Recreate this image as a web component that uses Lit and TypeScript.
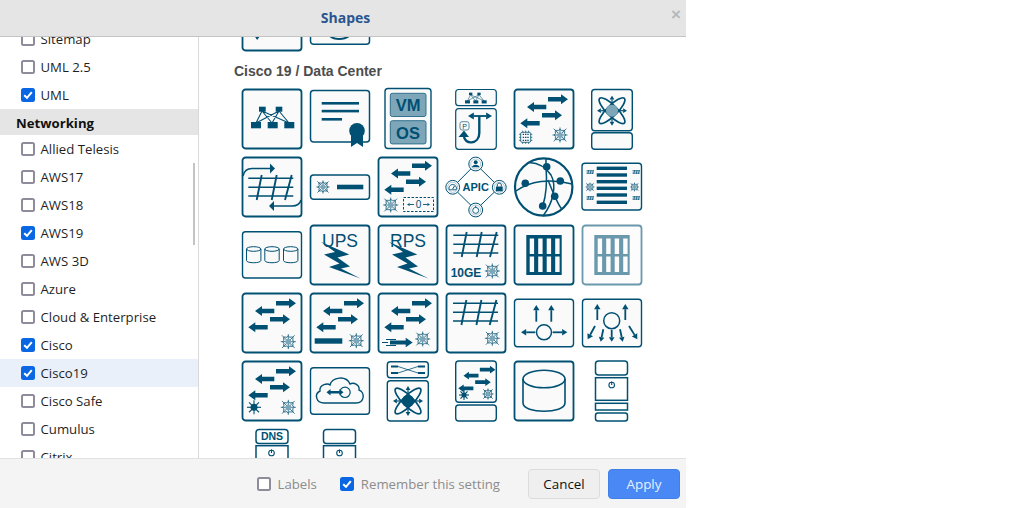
import { LitElement, html, css, svg } from "lit";
import { customElement } from "lit/decorators.js";

const C = "#005073";
const MID = "#7ea6b9";

// --- drawing helpers, coordinates are px inside a 68x68 cell ---
const box = (x1: number, y1: number, x2: number, y2: number, sw = 1.5, r = 3) =>
  svg`<rect x=${x1} y=${y1} width=${x2 - x1} height=${y2 - y1} rx=${r} fill="#fafafa" stroke=${C} stroke-width=${sw} />`;

const big = () => box(4.5, 4.5, 63.5, 63.5, 1.8);

const bar = (x1: number, y1: number, x2: number, y2: number) =>
  svg`<rect x=${x1} y=${y1} width=${x2 - x1} height=${y2 - y1} fill=${C} />`;

const fat = (x1: number, x2: number, y: number, t = 4.6, h = 10, l = 7) => {
  const d = x2 > x1 ? 1 : -1;
  const m = x2 - d * l;
  return svg`<polygon fill=${C} points="${x1},${y - t / 2} ${m},${y - t / 2} ${m},${y - h / 2} ${x2},${y} ${m},${y + h / 2} ${m},${y + t / 2} ${x1},${y + t / 2}" />`;
};

const thin = (x1: number, y1: number, x2: number, y2: number, sw = 1.6, s = 4) => {
  const a = Math.atan2(y2 - y1, x2 - x1);
  const bx = x2 - Math.cos(a) * s * 1.3;
  const by = y2 - Math.sin(a) * s * 1.3;
  const nx = -Math.sin(a) * s * 0.8;
  const ny = Math.cos(a) * s * 0.8;
  return svg`<line x1=${x1} y1=${y1} x2=${bx} y2=${by} stroke=${C} stroke-width=${sw} />
    <polygon fill=${C} points="${x2},${y2} ${bx + nx},${by + ny} ${bx - nx},${by - ny}" />`;
};

const fourArrows = (dx = 0, dy = 0, k = 1) => svg`<g transform="translate(${dx} ${dy}) scale(${k})">
  ${fat(38, 58, 14.3)}${fat(36.3, 17, 22)}${fat(32, 52, 30.3)}${fat(29.7, 10.3, 38.3)}
</g>`;

const snow = (cx: number, cy: number, r = 7.5, fill = MID, sw = 0.85) => {
  const rays = [0, 90, 180, 270];
  return svg`<g transform="translate(${cx} ${cy})" stroke="#1f6683" stroke-width=${sw} fill="none">
    ${rays.map(
      (a) => svg`<g transform="rotate(${a})">
        <line x1="0" y1="0" x2=${r} y2="0" />
        <line x1="0" y1="0" x2=${r * 0.85} y2=${r * 0.85} />
        <path d="M${r * 0.5} ${-r * 0.26} L${r * 0.8} 0 L${r * 0.5} ${r * 0.26}" />
        <path d="M${r * 0.62} ${r * 0.24} L${r * 0.62} ${r * 0.62} L${r * 0.24} ${r * 0.62}" />
      </g>`,
    )}
    <circle r=${r * 0.38} fill=${fill} stroke="none" />
  </g>`;
};

const sun = (cx: number, cy: number, r = 7) => {
  const rays = [0, 45, 90, 135, 180, 225, 270, 315];
  return svg`<g transform="translate(${cx} ${cy})" stroke=${C} stroke-width="1.1">
    ${rays.map((a) => svg`<line transform="rotate(${a})" x1="0" y1="0" x2=${r} y2="0" />`)}
    <circle r=${r * 0.5} fill=${C} stroke="none" />
  </g>`;
};

const mesh = (dx = 0, dy = 0, k = 1, sw = 1.5) => svg`<g transform="translate(${dx} ${dy}) scale(${k})" stroke=${C} stroke-width=${sw} fill="none">
  <path d="M0 3.3H45M0 12.3H45M0 21H45" />
  <path d="M13.4 0L8.4 25M28.4 0L23.4 25M43.4 0L36.7 25" stroke-width=${sw * 1.25} />
</g>`;

const atom = (cx: number, cy: number, fill = MID, r = 6) => svg`<g transform="translate(${cx} ${cy})">
  <ellipse rx="17.5" ry="5.2" transform="rotate(45)" fill="none" stroke=${C} stroke-width="1.7" />
  <ellipse rx="17.5" ry="5.2" transform="rotate(-45)" fill="none" stroke=${C} stroke-width="1.7" />
  ${thin(-5, 0, -15, 0, 1.2, 3)}${thin(5, 0, 15, 0, 1.2, 3)}${thin(0, -5, 0, -15, 1.2, 3)}${thin(0, 5, 0, 15, 1.2, 3)}
  <circle r=${r} fill=${fill} />
</g>`;

const tree = (dx = 0, dy = 0, k = 1) => svg`<g transform="translate(${dx} ${dy}) scale(${k})">
  <path d="M24 26L18 38M24 26L34 38M24 26L51 38M41 26L18 38M41 26L34 38M41 26L51 38" stroke=${C} stroke-width="1.1" fill="none" />
  ${bar(21, 21.7, 27.7, 26.7)}${bar(37.7, 21.7, 44.3, 26.7)}
  ${bar(13, 37, 23, 43.3)}${bar(29.7, 37, 39.7, 43.3)}${bar(46.3, 37, 56.3, 43.3)}
</g>`;

const bolt = () => svg`<polygon fill=${C} points="14.7,20.7 43.3,33.5 31.5,36.5 44,45.5 35,47.5 54.5,57.5 23,46 33.5,42.5 18,33.5 29,31" />`;

const power = (cx: number, cy: number) => svg`<g fill="none" stroke=${C} stroke-width="1.1">
  <circle cx=${cx} cy=${cy} r="2.8" /><line x1=${cx} y1=${cy - 3.6} x2=${cx} y2=${cy} />
</g>`;

const pallet = () => svg`${bar(16.3, 14, 51.7, 54)}
  ${[19.7, 28.2, 36.7, 45.2].map(
    (x) => svg`<rect x=${x} y="17.5" width="4.4" height="15.5" fill="#fafafa" /><rect x=${x} y="35.5" width="4.4" height="15.5" fill="#fafafa" />`,
  )}`;

const cyl = (cx: number, top: number, rx: number, ry: number, h: number, sw: number) => svg`<g fill="none" stroke=${C} stroke-width=${sw}>
  <ellipse cx=${cx} cy=${top} rx=${rx} ry=${ry} />
  <path d="M${cx - rx} ${top}V${top + h}C${cx - rx} ${top + h + ry * 1.3} ${cx + rx} ${top + h + ry * 1.3} ${cx + rx} ${top + h}V${top}" />
</g>`;

const tinyHash = (x: number, y: number) => mesh(x, y, 0.16, 3.6);

const chip = (cx: number, cy: number) => svg`<g transform="translate(${cx} ${cy})" stroke=${C} fill="none" stroke-width=".8">
  <rect x="-5" y="-5" width="10" height="10" rx="1.5" />
  <path d="M-3 -6.6V-5M0 -6.6V-5M3 -6.6V-5M-3 5V6.6M0 5V6.6M3 5V6.6M-6.6 -3H-5M-6.6 0H-5M-6.6 3H-5M5 -3H6.6M5 0H6.6M5 3H6.6" />
  <path d="M-3 -3h1.4M-.7 -3h1.4M1.6 -3h1.4M-3 0h1.4M-.7 0h1.4M1.6 0h1.4M-3 3h1.4M-.7 3h1.4M1.6 3h1.4" stroke-width="1.3" />
</g>`;

const label = (x: number, y: number, size: number, text: string, weight = "bold", fill = C) =>
  svg`<text x=${x} y=${y} font-size=${size} font-weight=${weight} fill=${fill} text-anchor="middle" font-family="Liberation Sans, sans-serif">${text}</text>`;

// top row is scrolled away, only the lower edge of each icon shows
const above = [
  svg`${big()}<polygon fill=${C} points="16.5,49 22,49 19.2,53" />`,
  svg`${box(4.5, 10.7, 63.5, 57.3)}<path d="M24 49C28 53 38 53 43 49" fill="none" stroke=${C} stroke-width="2" />`,
];

const apicNode = (x: number, y: number, glyph: unknown) => svg`
  <circle cx=${x} cy=${y} r="6.9" fill="#fff" stroke=${C} />
  <circle cx=${x} cy=${y} r="5" fill="none" stroke="#7ea6b9" stroke-width=".6" />
  ${glyph}`;

const icons = [
  svg`${big()}${tree()}`,
  svg`${box(4.5, 5.5, 63.5, 57)}
    <rect x="15.7" y="17" width="37.3" height="2.6" fill=${C} /><rect x="15.7" y="24.8" width="37.3" height="2.6" fill=${C} /><rect x="15.7" y="33" width="20.3" height="2.6" fill=${C} />
    <polygon fill=${C} points="45,48 57,48 57,62 51,58 45,62" /><circle cx="51" cy="45.7" r="7.8" fill=${C} />`,
  svg`${box(11, 3.5, 57, 63.5, 1.4)}
    <rect x="16.3" y="8.3" width="35.7" height="23.2" rx="2" fill=${MID} stroke="#33728f" />
    <rect x="16.3" y="35.7" width="35.7" height="23.2" rx="2" fill=${MID} stroke="#33728f" />
    ${label(34, 26, 16.5, "VM")}${label(34, 53.5, 16.5, "OS")}`,
  svg`${box(13.7, 4.5, 54.3, 20.7, 1.2)}${box(13.7, 23.7, 54.3, 64.3, 1.2)}
    ${tree(16.5, -3.2, 0.5)}
    ${thin(37, 31, 26, 31, 1.8, 4.5)}${thin(37, 31, 50, 31, 1.8, 4.5)}
    <path d="M37.3 31V48C37.3 60 22 60 22 51" fill="none" stroke=${C} stroke-width="2.4" />
    <polygon fill=${C} points="16.5,52 27,52 22,45.5" />
    <rect x="18" y="36.7" width="9" height="8.3" rx="2" fill="#fafafa" stroke="#33728f" stroke-width=".8" />
    ${label(22.5, 43.5, 7, "P", "normal")}`,
  svg`${big()}${fourArrows()}${snow(50, 50)}${chip(15.7, 52.3)}`,
  svg`${box(13.7, 4.5, 54.3, 45.7, 1.4)}${box(13.7, 47.7, 54.3, 64.3, 1.4)}${atom(34, 25.7)}`,

  svg`${big()}${mesh(10.3, 22)}
    <path d="M5 23C6 18 9 15.5 14 15.5H32" fill="none" stroke=${C} stroke-width="1.5" />
    <polygon fill=${C} points="32,10.5 37,15.5 32,20.5" />
    <path d="M63 47C62 51 59 53 54 53H36" fill="none" stroke=${C} stroke-width="1.5" />
    <polygon fill=${C} points="36,48 31,53 36,58" />`,
  svg`${box(4.5, 22, 63.5, 46.3)}${snow(17, 34, 6.5)}${bar(31, 31.7, 57.3, 36.3)}`,
  svg`${big()}${fourArrows(0, -1.5)}${snow(16.7, 52)}
    <rect x="29.5" y="44.5" width="30" height="14" fill="none" stroke=${C} stroke-dasharray="2.5 1.5" />
    ${label(44.5, 55, 10, "0", "normal")}${thin(40, 51.5, 33, 51.5, 0.9, 2)}${thin(49, 51.5, 56, 51.5, 0.9, 2)}`,
  svg`<path d="M33.7 11L57.3 34.3L33.7 57L10.7 34.3Z" fill="none" stroke=${C} />
    ${apicNode(33.7, 11, svg`<circle cx="33.7" cy="9.2" r="2" fill=${C} /><path d="M30 14.2C30 10.8 37.4 10.8 37.4 14.2Z" fill=${C} />`)}
    ${apicNode(57.3, 34.3, svg`<rect x="53.9" y="33.5" width="6.8" height="4.8" fill=${C} /><path d="M55.3 33.5V31.8C55.3 29.6 59.3 29.6 59.3 31.8V33.5" fill="none" stroke=${C} />`)}
    ${apicNode(33.7, 57, svg`<circle cx="33.7" cy="57.4" r="3" fill="none" stroke=${C} stroke-width=".9" /><path d="M33.7 54.4V52.8" stroke=${C} />`)}
    ${apicNode(10.7, 34.3, svg`<path d="M7.2 36.8A3.8 3.8 0 1 1 14.2 36.8Z" fill="none" stroke=${C} stroke-width=".9" /><path d="M10.7 36L12.6 32.8" stroke=${C} />`)}
    ${label(33.7, 38.3, 11, "APIC")}`,
  svg`<circle cx="33.7" cy="34" r="28.7" fill="#fafafa" stroke=${C} stroke-width="2.2" />
    <g fill="none" stroke=${C} stroke-width="1.5">
      <path d="M6 38C20 28 40 25 62 31" />
      <path d="M19 9.5C28 10 36 14 41 22C47 33 43 50 33 63" />
      <path d="M36 5V14C37 26 37 40 32.7 53" />
      <path d="M38 27C40 32 42 37 44.7 43.3C48 50 50 55 52 56" />
    </g>
    ${[[36.7, 13.7], [50.3, 28], [44.7, 43.3], [32.7, 53], [15.3, 30.3]].map(
      ([x, y]) => svg`<circle cx=${x} cy=${y} r="3.8" fill=${C} />`,
    )}`,
  svg`${box(4, 10.3, 63.5, 57, 1.4)}
    ${[15.3, 22, 28.7, 35.3, 42, 49.3].map((y) => bar(18.7, y - 1.7, 49, y + 1.7))}
    ${tinyHash(8.5, 17)}${tinyHash(54.5, 17)}${snow(12, 34, 4.4, MID, 0.7)}${snow(56.5, 34, 4.4, MID, 0.7)}
    ${tinyHash(8.5, 43)}${tinyHash(54.5, 43)}`,

  svg`${box(4.5, 10.7, 63.5, 57, 1.4)}${cyl(15.7, 28, 7.2, 2.3, 11.5, 1)}${cyl(34, 28, 7.2, 2.3, 11.5, 1)}${cyl(52.7, 28, 7.2, 2.3, 11.5, 1)}`,
  svg`${big()}${label(34, 25.7, 17.5, "UPS", "normal")}${bolt()}`,
  svg`${big()}${label(34, 25.7, 17.5, "RPS", "normal")}${bolt()}`,
  svg`${big()}${mesh(11.3, 11)}${label(24, 56, 12, "10GE")}${snow(50.3, 50, 7.5)}`,
  svg`${big()}${pallet()}`,
  svg`<g opacity=".58">${big()}${pallet()}</g>`,

  svg`${big()}${fourArrows()}${snow(50.3, 52.7)}`,
  svg`${big()}${fourArrows()}${bar(8.7, 49.3, 36.3, 54.7)}${snow(50.3, 51.7)}`,
  svg`${big()}${fourArrows()}${snow(48.7, 50)}
    ${fat(16, 38.7, 53.5, 4, 9.5, 7)}<path d="M8 53.5H14M12 50.5H22M12 56.5H22" stroke=${C} />`,
  svg`${big()}${mesh(11, 11)}${snow(50.3, 49.3)}`,
  svg`${box(4.5, 10.3, 63.5, 57.7, 1.4)}<circle cx="34" cy="43.3" r="7.5" fill="none" stroke=${C} stroke-width="1.5" />
    ${thin(26.3, 32.7, 26.3, 16, 1.8, 4)}${thin(41.3, 32.7, 41.3, 16, 1.8, 4)}${thin(25.3, 43.3, 11, 43.3, 1.8, 4)}${thin(42.7, 43.3, 57.3, 43.3, 1.8, 4)}`,
  svg`${box(4.5, 10.3, 63.5, 57.7, 1.4)}<circle cx="33.7" cy="31.7" r="8" fill="none" stroke=${C} stroke-width="1.5" />
    ${thin(19.3, 31, 19.3, 15, 1.8, 4)}${thin(47.3, 31, 47.3, 15, 1.8, 4)}
    ${thin(17, 37, 9.7, 50.3, 1.8, 4)}${thin(25.3, 40.3, 22.7, 52.7, 1.8, 3.5)}${thin(33.7, 41, 33.7, 52.7, 1.8, 3.5)}${thin(42, 40.3, 44.7, 52.7, 1.8, 3.5)}${thin(51, 37, 59.3, 50.3, 1.8, 4)}`,

  svg`${big()}${fourArrows()}${sun(16, 50.3, 7)}${snow(50.3, 50.3)}`,
  svg`${box(4.5, 10.7, 63.5, 57.3, 1.4)}
    <path d="M18 46C10 46 8 37 14 34C13 27 22 26 24 28C26 20 40 18 44 27C48 25 54 28 53 33C59 35 59 46 50 46Z" fill="none" stroke=${C} stroke-width="1.4" />
    <circle cx="39" cy="35.3" r="5.2" fill="none" stroke=${C} stroke-width="1.2" />
    ${fat(29, 20.5, 35.3, 2.4, 6.5, 4)}${fat(29, 37.5, 35.3, 2.4, 6.5, 4)}`,
  svg`${box(13.3, 4.7, 54.3, 20.7, 1.4)}${box(13.3, 23.7, 54.3, 64, 1.4)}
    <path d="M24 9.5L44 16M24 16L44 9.5" stroke=${C} stroke-width=".8" fill="none" />
    ${bar(17, 8.5, 24, 10.5)}${bar(17, 15, 24, 17)}${bar(44, 8.5, 51, 10.5)}${bar(44, 15, 51, 17)}
    ${atom(34, 44, C, 6)}`,
  svg`${box(13.7, 4, 54.3, 45.3, 1.4)}${box(13.7, 48, 54.3, 64, 1.4)}
    ${fourArrows(8.2, 1.5, 0.78)}${sun(22, 38, 5)}${snow(46, 37, 5.5)}`,
  svg`${big()}<ellipse cx="34" cy="22" rx="21" ry="8.8" fill="none" stroke=${C} stroke-width="1.6" />
    <path d="M13 22V46C13 57 55 57 55 46V22" fill="none" stroke=${C} stroke-width="1.6" />`,
  svg`<g fill="#fff" stroke=${C} stroke-width="1.5">
      <rect x="17.5" y="4" width="32" height="14" rx="3" /><rect x="17.5" y="20.7" width="32" height="22.6" />
      <rect x="17.5" y="46.3" width="32" height="6.7" /><rect x="17.5" y="56" width="32" height="8" rx="2.5" />
    </g>${power(33.7, 28)}`,

  svg`<rect x="18" y="4.5" width="32" height="14" rx="3" fill="#fff" stroke=${C} stroke-width="1.5" />
    ${label(34, 15.3, 10.5, "DNS")}
    <rect x="18" y="20.7" width="32" height="24" fill="#fff" stroke=${C} stroke-width="1.5" />${power(33.5, 28)}`,
  svg`<rect x="17.5" y="4.5" width="32" height="14" rx="3" fill="#fff" stroke=${C} stroke-width="1.5" />
    <rect x="17.5" y="20.7" width="32" height="24" fill="#fff" stroke=${C} stroke-width="1.5" />${power(33.5, 28)}`,
];

type Row = { name: string; on?: boolean; active?: boolean; group?: boolean };

const rows: Row[] = [
  { name: "Sitemap" },
  { name: "UML 2.5" },
  { name: "UML", on: true },
  { name: "Networking", group: true },
  { name: "Allied Telesis" },
  { name: "AWS17" },
  { name: "AWS18" },
  { name: "AWS19", on: true },
  { name: "AWS 3D" },
  { name: "Azure" },
  { name: "Cloud & Enterprise" },
  { name: "Cisco", on: true },
  { name: "Cisco19", on: true, active: true },
  { name: "Cisco Safe" },
  { name: "Cumulus" },
  { name: "Citrix" },
];

@customElement("app-root")
export class AppRoot extends LitElement {
  static styles = css`
    :host {
      display: block;
      width: 686px;
      height: 508px;
      font-family: "Open Sans", "Noto Sans", sans-serif;
      font-size: 13.2px;
      color: #1f1f1f;
    }

    .dialog {
      height: 508px;
      display: flex;
      flex-direction: column;
      position: relative;
    }

    .head {
      height: 34px;
      flex: none;
      background: #e5e5e5;
      border-bottom: 1px solid #c4c4c4;
      display: flex;
      align-items: center;
      justify-content: center;
      font-size: 14px;
      font-weight: 700;
      color: #2a5590;
      padding: 0 0 2px 5px;
    }

    .close {
      position: absolute;
      left: 671px;
      top: 5px;
      font-size: 17px;
      font-weight: 700;
      color: #b4b9bf;
      font-family: "Liberation Sans", sans-serif;
    }

    .body {
      flex: 1;
      min-height: 0;
      display: flex;
      overflow: hidden;
    }

    .side {
      width: 198px;
      flex: none;
      border-right: 1px solid #d9d9d9;
      position: relative;
      overflow: hidden;
    }

    .list {
      margin-top: -12px;
    }

    .row {
      height: 28px;
      display: flex;
      align-items: center;
      gap: 6px;
      padding-left: 20.5px;
    }

    .row.active {
      background: #e9f0f9;
    }

    .group {
      height: 25px;
      display: flex;
      align-items: center;
      padding: 1px 0 0 16px;
      background: #e5e5e5;
      font-weight: 700;
      color: #111;
    }

    .cb {
      width: 14px;
      height: 14px;
      box-sizing: border-box;
      border: 2px solid #8f8b9a;
      border-radius: 2.5px;
      background: #fff;
      flex: none;
      display: flex;
      align-items: center;
      justify-content: center;
    }

    .cb.on {
      background: #0b66e4;
      border-color: #0b66e4;
    }

    .cb svg {
      width: 10px;
      height: 10px;
    }

    .thumb {
      position: absolute;
      left: 193px;
      top: 126px;
      width: 2px;
      height: 82px;
      background: #c4c4c4;
    }

    .main {
      flex: 1;
      overflow: hidden;
      padding-left: 39px;
    }

    .scroll {
      margin-top: -50px;
    }

    .title {
      height: 28px;
      display: flex;
      align-items: center;
      padding-top: 2px;
      margin-left: -4px;
      font-family: "Liberation Sans", sans-serif;
      font-size: 14px;
      font-weight: 700;
      color: #4d4d4d;
    }

    .grid {
      display: grid;
      grid-template-columns: repeat(6, 68px);
      grid-auto-rows: 68px;
    }

    .grid svg {
      width: 68px;
      height: 68px;
      display: block;
    }

    .foot {
      height: 49px;
      flex: none;
      background: #f4f4f4;
      border-top: 1px solid #e2e2e2;
      display: flex;
      align-items: center;
      padding-right: 6px;
      justify-content: flex-end;
      color: #8c8c8c;
    }

    .check {
      display: flex;
      align-items: center;
      gap: 7px;
    }

    .check span:last-child {
      padding-top: 1px;
    }

    .check.labels {
      margin-right: 23px;
    }

    .check.keep {
      margin-right: 28px;
    }

    .btn {
      width: 72px;
      height: 30px;
      box-sizing: border-box;
      border-radius: 4px;
      display: flex;
      align-items: center;
      justify-content: center;
      padding-top: 1px;
      font-size: 13.4px;
    }

    .cancel {
      background: #efefef;
      border: 1px solid #dcdcdc;
      color: #111;
      margin-right: 8px;
    }

    .apply {
      background: #4a89f5;
      border: 1px solid #3f7fe8;
      color: #e6efff;
    }
  `;

  private box(on?: boolean) {
    return html`<span class="cb ${on ? "on" : ""}">
      ${on
        ? html`<svg viewBox="0 0 10 10"><path d="M1.2 5.2L4 7.8L8.8 2.2" fill="none" stroke="#fff" stroke-width="2" /></svg>`
        : null}
    </span>`;
  }

  private cell(body: unknown) {
    return html`<svg viewBox="0 0 68 68">${body}</svg>`;
  }

  render() {
    return html`
      <div class="dialog">
        <div class="head">Shapes</div>
        <span class="close">×</span>
        <div class="body">
          <div class="side">
            <div class="list">
              ${rows.map((r) =>
                r.group
                  ? html`<div class="group">${r.name}</div>`
                  : html`<div class="row ${r.active ? "active" : ""}">${this.box(r.on)}<span>${r.name}</span></div>`,
              )}
            </div>
            <div class="thumb"></div>
          </div>
          <div class="main">
            <div class="scroll">
              <div class="grid">${above.map((i) => this.cell(i))}</div>
              <div class="title">Cisco 19 / Data Center</div>
              <div class="grid">${icons.map((i) => this.cell(i))}</div>
            </div>
          </div>
        </div>
        <div class="foot">
          <label class="check labels">${this.box(false)}<span>Labels</span></label>
          <label class="check keep">${this.box(true)}<span>Remember this setting</span></label>
          <div class="btn cancel">Cancel</div>
          <div class="btn apply">Apply</div>
        </div>
      </div>
    `;
  }
}
